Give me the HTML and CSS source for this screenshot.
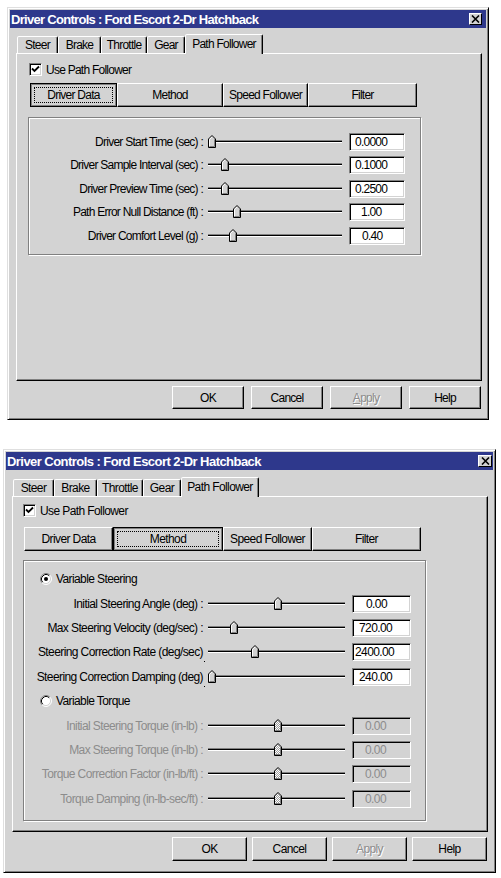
FILE: index.html
```html
<!DOCTYPE html>
<html>
<head>
    <title>Driver Controls</title>
    <meta charset="utf-8" />
    <link rel="stylesheet" href="styles.css">
</head>
<body>
    <svg class="defs" width="0" height="0">
        <defs>
            <pattern id="dots" width="2" height="2" patternUnits="userSpaceOnUse">
                <rect width="2" height="2" fill="#fff" />
                <rect width="1" height="1" fill="#a0a0a0" />
                <rect x="1" y="1" width="1" height="1" fill="#a0a0a0" />
            </pattern>
            <symbol id="thumb" viewBox="0 0 8 13">
                <path d="M0.5 12.5V4L4 0.5 7.5 4V12.5Z" fill="#d3d3d3" stroke="#000" />
                <path d="M1.5 11.5V4.4L4 1.9" fill="none" stroke="#fff" />
                <path d="M6.5 4.4V11.5H1.5" fill="none" stroke="#808080" />
            </symbol>
            <symbol id="thumb-off" viewBox="0 0 8 13">
                <path d="M0.5 12.5V4L4 0.5 7.5 4V12.5Z" fill="url(#dots)" stroke="#000" />
                <path d="M6.5 4.4V11.5H1.5" fill="none" stroke="#808080" />
            </symbol>
            <symbol id="radio" viewBox="0 0 12 12">
                <circle cx="6" cy="6" r="5" fill="#fff" />
                <path d="M2.11 9.89A5.5 5.5 0 0 1 9.89 2.11" fill="none" stroke="#808080" />
                <path d="M2.82 9.18A4.5 4.5 0 0 1 9.18 2.82" fill="none" stroke="#000" />
                <path d="M9.89 2.11A5.5 5.5 0 0 1 2.11 9.89" fill="none" stroke="#fff" />
                <path d="M9.18 2.82A4.5 4.5 0 0 1 2.82 9.18" fill="none" stroke="#d3d3d3" />
            </symbol>
        </defs>
    </svg>

    <!-- first dialog : Driver Data page -->
    <div class="dlg dlg-a">
        <div class="titlebar">
            <span class="title">Driver Controls : Ford Escort 2-Dr Hatchback</span>
            <span class="close"><svg width="9" height="8" viewBox="0 0 9 8"><path d="M1 0.5L8 7.5M8 0.5L1 7.5" stroke="#000" stroke-width="1.6" /></svg></span>
        </div>
        <div class="dlg-body">
            <div class="tabs">
                <span class="tab t-steer">Steer</span>
                <span class="tab t-brake">Brake</span>
                <span class="tab t-throttle">Throttle</span>
                <span class="tab t-gear">Gear</span>
                <span class="tab t-path active">Path Follower</span>
            </div>
            <div class="panel">
                <div class="check">
                    <span class="box"><svg width="9" height="9" viewBox="0 0 9 9"><path d="M1 3.5L3.5 6 8 1.5" fill="none" stroke="#000" stroke-width="1.8" /></svg></span>
                    Use Path Follower
                </div>
                <div class="subtabs">
                    <span class="sub on"><span class="focus">Driver Data</span></span>
                    <span class="sub">Method</span>
                    <span class="sub">Speed Follower</span>
                    <span class="sub">Filter</span>
                </div>
                <div class="group">
                    <div class="row">
                        <span class="lbl">Driver Start Time (sec) :</span>
                        <span class="slider"><svg class="thumb" style="left:0px"><use href="#thumb" /></svg></span>
                        <span class="field in-5">0.0000</span>
                    </div>
                    <div class="row">
                        <span class="lbl">Driver Sample Interval (sec) :</span>
                        <span class="slider"><svg class="thumb" style="left:13px"><use href="#thumb" /></svg></span>
                        <span class="field in-5">0.1000</span>
                    </div>
                    <div class="row">
                        <span class="lbl">Driver Preview Time (sec) :</span>
                        <span class="slider"><svg class="thumb" style="left:13px"><use href="#thumb" /></svg></span>
                        <span class="field in-5">0.2500</span>
                    </div>
                    <div class="row">
                        <span class="lbl">Path Error Null Distance (ft) :</span>
                        <span class="slider"><svg class="thumb" style="left:25px"><use href="#thumb" /></svg></span>
                        <span class="field in-11">1.00</span>
                    </div>
                    <div class="row">
                        <span class="lbl">Driver Comfort Level (g) :</span>
                        <span class="slider"><svg class="thumb" style="left:21px"><use href="#thumb" /></svg></span>
                        <span class="field in-12">0.40</span>
                    </div>
                </div>
            </div>
            <div class="actions">
                <span class="btn">OK</span>
                <span class="btn">Cancel</span>
                <span class="btn off"><u>A</u>pply</span>
                <span class="btn">Help</span>
            </div>
        </div>
    </div>

    <!-- second dialog : Method page -->
    <div class="dlg dlg-b">
        <div class="titlebar">
            <span class="title">Driver Controls : Ford Escort 2-Dr Hatchback</span>
            <span class="close"><svg width="9" height="8" viewBox="0 0 9 8"><path d="M1 0.5L8 7.5M8 0.5L1 7.5" stroke="#000" stroke-width="1.6" /></svg></span>
        </div>
        <div class="dlg-body">
            <div class="tabs">
                <span class="tab t-steer">Steer</span>
                <span class="tab t-brake">Brake</span>
                <span class="tab t-throttle">Throttle</span>
                <span class="tab t-gear">Gear</span>
                <span class="tab t-path active">Path Follower</span>
            </div>
            <div class="panel">
                <div class="check">
                    <span class="box"><svg width="9" height="9" viewBox="0 0 9 9"><path d="M1 3.5L3.5 6 8 1.5" fill="none" stroke="#000" stroke-width="1.8" /></svg></span>
                    Use Path Follower
                </div>
                <div class="subtabs">
                    <span class="sub">Driver Data</span>
                    <span class="sub on"><span class="focus">Method</span></span>
                    <span class="sub">Speed Follower</span>
                    <span class="sub">Filter</span>
                </div>
                <div class="group">
                    <div class="radio-row">
                        <svg class="radio" width="12" height="12"><use href="#radio" /><circle cx="6" cy="6" r="2" fill="#000" /></svg>
                        Variable Steering
                    </div>
                    <div class="row">
                        <span class="lbl">Initial Steering Angle (deg) :</span>
                        <span class="slider"><svg class="thumb" style="left:66px"><use href="#thumb" /></svg></span>
                        <span class="field in-13">0.00</span>
                    </div>
                    <div class="row">
                        <span class="lbl">Max Steering Velocity (deg/sec) :</span>
                        <span class="slider"><svg class="thumb" style="left:22px"><use href="#thumb" /></svg></span>
                        <span class="field in-6">720.00</span>
                    </div>
                    <div class="row">
                        <span class="lbl wrapped">Steering Correction Rate (deg/sec)</span>
                        <span class="slider"><svg class="thumb" style="left:43px"><use href="#thumb" /></svg></span>
                        <span class="field in-2">2400.00</span>
                    </div>
                    <div class="row">
                        <span class="lbl wrapped">Steering Correction Damping (deg)</span>
                        <span class="slider"><svg class="thumb" style="left:0px"><use href="#thumb" /></svg></span>
                        <span class="field in-6">240.00</span>
                    </div>
                    <div class="radio-row">
                        <svg class="radio" width="12" height="12"><use href="#radio" /></svg>
                        Variable Torque
                    </div>
                    <div class="row dim">
                        <span class="lbl">Initial Steering Torque (in-lb) :</span>
                        <span class="slider"><svg class="thumb" style="left:66px"><use href="#thumb-off" /></svg></span>
                        <span class="field in-12">0.00</span>
                    </div>
                    <div class="row dim">
                        <span class="lbl">Max Steering Torque (in-lb) :</span>
                        <span class="slider"><svg class="thumb" style="left:66px"><use href="#thumb-off" /></svg></span>
                        <span class="field in-12">0.00</span>
                    </div>
                    <div class="row dim">
                        <span class="lbl">Torque Correction Factor (in-lb/ft) :</span>
                        <span class="slider"><svg class="thumb" style="left:66px"><use href="#thumb-off" /></svg></span>
                        <span class="field in-12">0.00</span>
                    </div>
                    <div class="row dim">
                        <span class="lbl">Torque Damping (in-lb-sec/ft) :</span>
                        <span class="slider"><svg class="thumb" style="left:66px"><use href="#thumb-off" /></svg></span>
                        <span class="field in-12">0.00</span>
                    </div>
                </div>
            </div>
            <div class="actions">
                <span class="btn">OK</span>
                <span class="btn">Cancel</span>
                <span class="btn off">Apply</span>
                <span class="btn">Help</span>
            </div>
        </div>
    </div>
</body>
</html>
```

FILE: styles.css
```css
body {
    margin: 0;
    background: #fff;
    color: #000;
    font-family: "Liberation Sans", Arial, sans-serif;
    font-size: 12px;
    letter-spacing: -0.75px;
}
.defs {
    position: absolute;
}

/* window frame */
.dlg {
    box-sizing: border-box;
    display: flex;
    flex-direction: column;
    padding: 2px;
    background: #d3d3d3;
    border: 1px solid;
    border-color: #dfdfdf #000 #000 #dfdfdf;
    box-shadow: inset 1px 1px #fff, inset -1px -1px #808080;
}
.dlg-a {
    width: 482px;
    height: 413px;
    margin: 7px 0 0 7px;
}
.dlg-b {
    width: 493px;
    height: 424px;
    margin: 29px 0 0 3px;
    letter-spacing: -0.6px;
}
.titlebar {
    height: 18px;
    flex: none;
    display: flex;
    align-items: center;
    justify-content: space-between;
    background: #2e388c;
    color: #fff;
    padding-left: 1px;
}
.title {
    font-weight: bold;
    font-size: 13px;
    letter-spacing: -0.7px;
}
.dlg-b .title {
    letter-spacing: -0.55px;
}
.close {
    box-sizing: border-box;
    width: 13px;
    height: 12px;
    margin-right: 4px;
    display: flex;
    align-items: center;
    justify-content: center;
    background: #d3d3d3;
    border: 1px solid;
    border-color: #fff #000 #000 #fff;
}
.dlg-b .close {
    width: 14px;
    margin-right: 1px;
}
.dlg-body {
    flex: 1;
    display: flex;
    flex-direction: column;
    padding: 6px 4px 0 6px;
}
.dlg-b .dlg-body {
    padding: 7px 5px 0 6px;
}

/* property sheet tabs */
.tabs {
    height: 19px;
    display: flex;
    align-items: flex-end;
    padding-left: 1px;
    position: relative;
    z-index: 1;
}
.tab {
    box-sizing: border-box;
    height: 17px;
    display: flex;
    align-items: center;
    justify-content: center;
    white-space: nowrap;
    background: #d3d3d3;
    border: 1px solid;
    border-bottom: none;
    border-color: #fff #000 transparent #fff;
    border-radius: 2px 2px 0 0;
    box-shadow: inset -1px 0 #808080;
}
.t-steer { width: 41px; }
.t-brake { width: 43px; }
.t-throttle { width: 46px; }
.t-gear { width: 38px; }
.t-path { width: 78px; }
.tab.active {
    height: 20px;
    margin-bottom: -1px;
    position: relative;
    z-index: 2;
    align-items: flex-start;
    padding-top: 2px;
}
.panel {
    box-sizing: border-box;
    display: flex;
    flex-direction: column;
    border: 1px solid;
    border-color: #fff #000 #000 #fff;
    box-shadow: inset -1px -1px #808080;
    height: 328px;
    padding: 9px 0 0 12px;
}
.dlg-b .panel {
    height: 336px;
    padding: 7px 0 0 10px;
}
.check {
    display: flex;
    align-items: center;
    height: 13px;
    gap: 4px;
}
.box {
    box-sizing: border-box;
    width: 13px;
    height: 13px;
    display: flex;
    align-items: center;
    justify-content: center;
    background: #fff;
    border: 1px solid;
    border-color: #808080 #fff #fff #808080;
    box-shadow: inset 1px 1px #000, inset -1px -1px #d3d3d3;
}

/* page selector buttons */
.subtabs {
    display: grid;
    grid-template-columns: 87px 106px 85px 109px;
    height: 23px;
    margin: 7px 0 0 1px;
}
.dlg-b .subtabs {
    grid-template-columns: 89px 110px 89px 109px;
    margin-top: 10px;
}
.sub, .btn {
    box-sizing: border-box;
    display: flex;
    align-items: center;
    justify-content: center;
    white-space: nowrap;
    background: #d3d3d3;
    border: 1px solid;
    border-color: #fff #000 #000 #fff;
    box-shadow: inset -1px -1px #808080;
}
.sub.on {
    border-color: #000;
    box-shadow: inset 1px 1px #808080, inset -1px -1px #808080;
}
.focus {
    box-sizing: border-box;
    align-self: stretch;
    flex: 1;
    margin: 3px;
    display: flex;
    align-items: center;
    justify-content: center;
    border: 1px dotted #000;
}

/* group of sliders */
.group {
    box-sizing: border-box;
    width: 393px;
    height: 138px;
    margin: 11px 0 0 -1px;
    padding-top: 12px;
    border: 1px solid #808080;
    box-shadow: inset 1px 1px #fff, 1px 1px #fff;
}
.dlg-b .group {
    width: 403px;
    height: 261px;
    margin: 10px 0 0 0;
    padding-top: 6px;
}
.row, .radio-row {
    display: flex;
    align-items: center;
    height: 23.5px;
}
.dlg-b .row, .dlg-b .radio-row {
    height: 24.4px;
}
.radio-row {
    padding-left: 16px;
    gap: 4px;
}
.lbl {
    width: 174px;
    text-align: right;
    white-space: nowrap;
    position: relative;
}
.dlg-b .lbl {
    width: 179px;
}
/* the colon of these labels wraps away; only its top dot shows */
.wrapped {
    margin-right: -2px;
    padding-right: 2px;
}
.wrapped::after {
    content: "";
    position: absolute;
    right: 0;
    bottom: -3px;
    width: 1px;
    height: 1px;
    background: #000;
}
.slider {
    width: 134px;
    height: 14px;
    margin: 0 7px 0 5px;
    position: relative;
}
.dlg-b .slider {
    width: 137px;
}
.slider::before {
    content: "";
    position: absolute;
    left: 0;
    right: 0;
    top: 6px;
    height: 0;
    border-top: 1px solid #000;
    border-bottom: 1px solid #fff;
    box-shadow: 0 -1px #808080;
}
.thumb {
    position: absolute;
    top: 0;
    width: 8px;
    height: 13px;
}
.field {
    box-sizing: border-box;
    width: 56px;
    height: 18px;
    display: flex;
    align-items: center;
    background: #fff;
    border: 1px solid;
    border-color: #808080 #fff #fff #808080;
    box-shadow: inset 1px 1px #000, inset -1px -1px #d3d3d3;
}
.dlg-b .field {
    width: 59px;
}
.in-2 { padding-left: 2px; }
.in-5 { padding-left: 5px; }
.in-6 { padding-left: 6px; }
.in-11 { padding-left: 11px; }
.in-12 { padding-left: 12px; }
.in-13 { padding-left: 13px; }
.dim {
    color: #8c8c8c;
}
.dim .field {
    background: #d3d3d3;
}

/* OK / Cancel / Apply / Help */
.actions {
    display: flex;
    justify-content: flex-end;
    gap: 7px;
    margin: 5px 1px 0 0;
}
.dlg-b .actions {
    gap: 5px;
}
.btn {
    width: 72px;
    height: 23px;
}
.dlg-b .btn {
    width: 75px;
    height: 24px;
}
.btn.off {
    color: #8c8c8c;
    text-shadow: 1px 1px #fff;
}
```
